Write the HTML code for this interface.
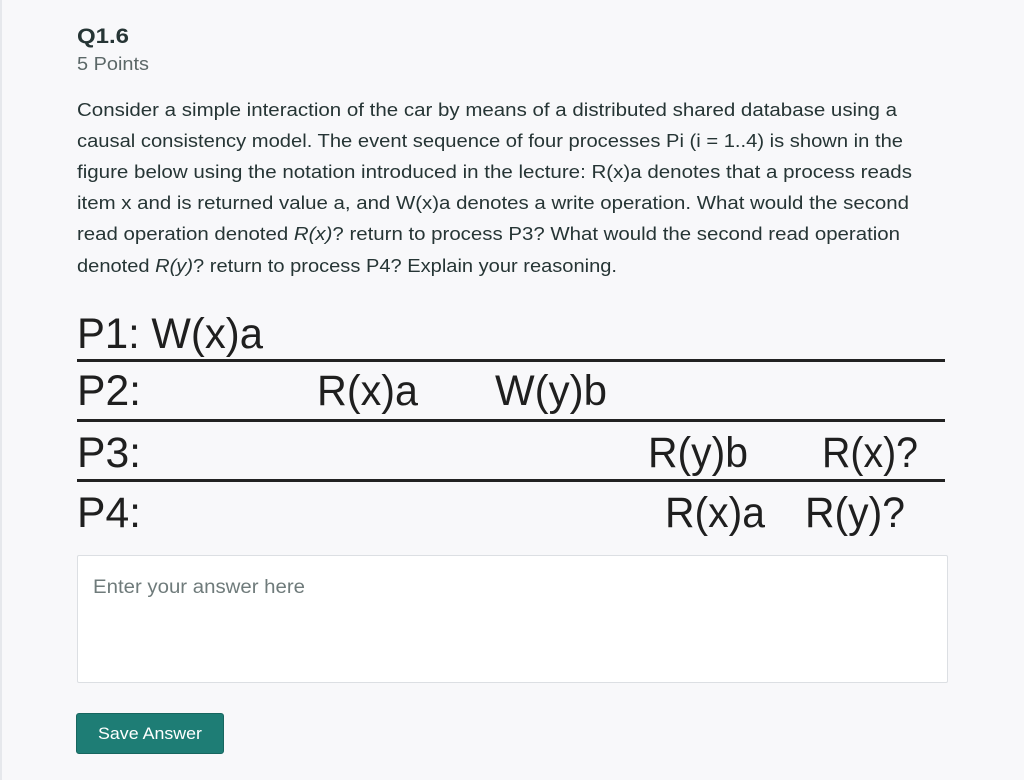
<!DOCTYPE html>
<html><head><meta charset="utf-8"><style>
html,body{margin:0;padding:0;width:1024px;height:780px;overflow:hidden;background:#f8f8fa;font-family:"Liberation Sans",sans-serif;}
.lb{position:absolute;left:0;top:0;width:2px;height:780px;background:#e6e8ec;}
svg{position:absolute;left:0;top:0;}
.ta{position:absolute;left:77px;top:555px;width:869px;height:126px;background:#fff;border:1px solid #dcdfe3;border-radius:2px;}
.btn{position:absolute;left:76px;top:713px;width:148px;height:41px;background:#1e7d75;border:1px solid #17665f;border-radius:3px;box-sizing:border-box;}
</style></head><body>
<div class="lb"></div>
<div class="ta"></div>
<div class="btn"></div>
<svg width="1024" height="780" xmlns="http://www.w3.org/2000/svg">
<g font-family="Liberation Sans, sans-serif" fill="#263535">
<text x="77" y="43" font-size="21" font-weight="bold" textLength="52" lengthAdjust="spacingAndGlyphs">Q1.6</text>
<text x="77" y="70" font-size="18" fill="#5c6868" textLength="72" lengthAdjust="spacingAndGlyphs">5 Points</text>
<g font-size="18.5">
<text x="77" y="116" textLength="820" lengthAdjust="spacingAndGlyphs">Consider a simple interaction of the car by means of a distributed shared database using a</text>
<text x="77" y="147" textLength="826" lengthAdjust="spacingAndGlyphs">causal consistency model. The event sequence of four processes Pi (i = 1..4) is shown in the</text>
<text x="77" y="178" textLength="835" lengthAdjust="spacingAndGlyphs">figure below using the notation introduced in the lecture: R(x)a denotes that a process reads</text>
<text x="77" y="209" textLength="832" lengthAdjust="spacingAndGlyphs">item x and is returned value a, and W(x)a denotes a write operation. What would the second</text>
<text x="77" y="240" textLength="823" lengthAdjust="spacingAndGlyphs">read operation denoted <tspan font-style="italic">R(x)</tspan>? return to process P3? What would the second read operation</text>
<text x="77" y="272" textLength="540" lengthAdjust="spacingAndGlyphs">denoted <tspan font-style="italic">R(y)</tspan>? return to process P4? Explain your reasoning.</text>
</g>
<g font-size="43" fill="#1f1f1f">
<text x="77" y="348" textLength="186" lengthAdjust="spacingAndGlyphs">P1: W(x)a</text>
<text x="77" y="405" textLength="64" lengthAdjust="spacingAndGlyphs">P2:</text>
<text x="317" y="405" textLength="101" lengthAdjust="spacingAndGlyphs">R(x)a</text>
<text x="495" y="405" textLength="112" lengthAdjust="spacingAndGlyphs">W(y)b</text>
<text x="77" y="467" textLength="64" lengthAdjust="spacingAndGlyphs">P3:</text>
<text x="648" y="467" textLength="100" lengthAdjust="spacingAndGlyphs">R(y)b</text>
<text x="822" y="467" textLength="96" lengthAdjust="spacingAndGlyphs">R(x)?</text>
<text x="77" y="527" textLength="64" lengthAdjust="spacingAndGlyphs">P4:</text>
<text x="665" y="527" textLength="100" lengthAdjust="spacingAndGlyphs">R(x)a</text>
<text x="805" y="527" textLength="100" lengthAdjust="spacingAndGlyphs">R(y)?</text>
</g>
<rect x="77" y="359" width="868" height="3" fill="#222"/>
<rect x="77" y="419" width="868" height="3" fill="#222"/>
<rect x="77" y="479" width="868" height="3" fill="#222"/>
<text x="93" y="593" font-size="19" fill="#6f7b7b" textLength="212" lengthAdjust="spacingAndGlyphs">Enter your answer here</text>
<text x="98" y="739" font-size="17" fill="#fff" textLength="104" lengthAdjust="spacingAndGlyphs">Save Answer</text>
</g>
</svg>
</body></html>
